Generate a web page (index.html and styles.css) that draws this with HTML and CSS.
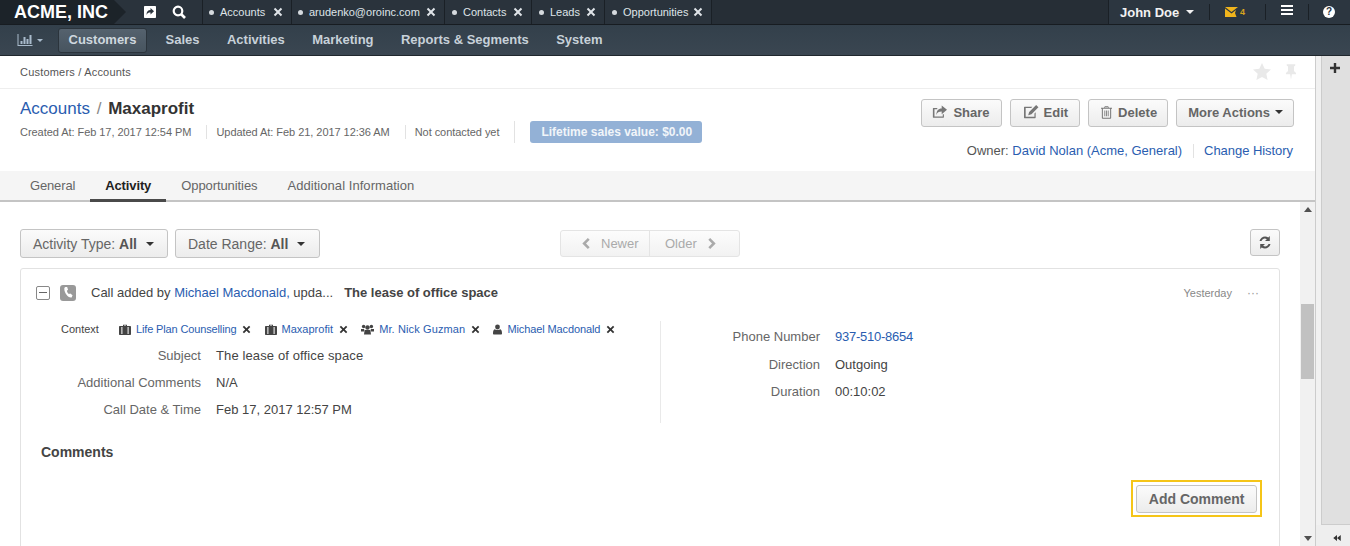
FILE: index.html
```html
<!DOCTYPE html>
<html lang="en">
<head>
  <meta charset="UTF-8">
  <title>Maxaprofit - Accounts</title>
  <meta name="viewport" content="width=device-width, initial-scale=1">
  <link rel="stylesheet" href="styles.css">
</head>
<body>
  <svg class="defs" width="0" height="0">
    <symbol id="i-x" viewBox="0 0 10 10"><path d="M2.2 .8 5 3.600 7.800 .8 9.200 2.200 6.400 5l2.800 2.800-1.400 1.400L5 6.400 2.200 9.200 .8 7.800 3.600 5 .8 2.200z"/></symbol>
    <symbol id="i-case" viewBox="0 0 12 11"><path d="M4 2V.8h4V2h3c.6 0 1 .4 1 1v7c0 .6-.4 1-1 1H1c-.6 0-1-.4-1-1V3c0-.6.4-1 1-1zm1 0h2v-.4H5zM2.400 3v7h1V3zm6.200 0v7h1V3z" fill-rule="evenodd"/></symbol>
    <symbol id="i-group" viewBox="0 0 13 10"><circle cx="2.600" cy="2" r="1.700"/><circle cx="10.400" cy="2" r="1.700"/><circle cx="6.500" cy="3" r="2.200"/><path d="M0 4.400h3.200L3 7H0zM13 4.400H9.800L10 7h3zM3.600 5.400h5.800L10 10H3z"/></symbol>
    <symbol id="i-user" viewBox="0 0 9 10"><circle cx="4.500" cy="2.500" r="2.400"/><path d="M1.500 4.800c1.500 1 4.500 1 6 0C8.600 5.400 9 7 9 9c0 .6-.4 1-1 1H1c-.6 0-1-.4-1-1 0-2 .4-3.600 1.500-4.200z"/></symbol>
    <symbol id="i-caret" viewBox="0 0 8 4"><path d="M0 0h8L4 4z"/></symbol>
  </svg>

  <header class="topbar">
    <div class="logo">ACME, INC</div>
    <div class="quick">
      <svg class="quick-icon" viewBox="0 0 14 14"><path d="M2 1h10c.6 0 1 .4 1 1v10c0 .6-.4 1-1 1H2c-.6 0-1-.4-1-1V2c0-.6.4-1 1-1zm5.500 2v2C5 5 3.500 6.500 3.500 10c.8-1.800 2-2.400 4-2.400v2L11 6.300z" fill-rule="evenodd"/></svg>
      <svg class="quick-icon" viewBox="0 0 14 14"><circle cx="6" cy="6" r="4.300" fill="none" stroke="#fff" stroke-width="2.200"/><path d="M9 9l4 4" stroke="#fff" stroke-width="2.600"/></svg>
    </div>
    <nav class="pins">
      <a class="pin pin-accounts"><i class="dot"></i>Accounts<svg class="pin-x"><use href="#i-x"/></svg></a>
      <a class="pin pin-email"><i class="dot"></i>arudenko@oroinc.com<svg class="pin-x"><use href="#i-x"/></svg></a>
      <a class="pin pin-contacts"><i class="dot"></i>Contacts<svg class="pin-x"><use href="#i-x"/></svg></a>
      <a class="pin pin-leads"><i class="dot"></i>Leads<svg class="pin-x"><use href="#i-x"/></svg></a>
      <a class="pin pin-opps"><i class="dot"></i>Opportunities<svg class="pin-x"><use href="#i-x"/></svg></a>
    </nav>
    <div class="usermenu">
      <div class="user">John Doe<svg class="user-caret"><use href="#i-caret"/></svg></div>
      <div class="mail">
        <svg class="mail-icon" viewBox="0 0 14 10"><path d="M0 0h13L6.500 5z"/><path d="M0 1.500 6.500 6.500 11 3l-1 3 1.500 4H0z"/></svg><span class="mail-count">4</span>
      </div>
      <div class="burger"><i></i><i></i><i></i></div>
      <div class="help">?</div>
    </div>
  </header>

  <nav class="mainnav">
    <div class="nav-chart">
      <svg class="chart-icon" viewBox="0 0 15 12"><path d="M0 0h1v11h14v1H0zM3 7h2v3H3zM6 3h2v7H6zM9 5h2v5H9zM12 1h2v9h-2z"/></svg>
      <svg class="chart-caret"><use href="#i-caret"/></svg>
    </div>
    <a class="nav-item active">Customers</a>
    <a class="nav-item">Sales</a>
    <a class="nav-item">Activities</a>
    <a class="nav-item">Marketing</a>
    <a class="nav-item">Reports &amp; Segments</a>
    <a class="nav-item">System</a>
  </nav>

  <div class="shell">
    <main class="content">
      <div class="crumbs">
        <span>Customers / Accounts</span>
        <div class="crumb-icons">
          <svg class="fav" viewBox="0 0 18 17"><path d="M9 0l2.700 5.800 6.300.7-4.700 4.300 1.300 6.200L9 13.900 3.400 17l1.300-6.200L0 6.500l6.300-.7z"/></svg>
          <svg class="pinned" viewBox="0 0 14 18"><path d="M2 0h10v1.500l-1.500 1V8c1.500.8 2.500 2 2.500 3.500H8L7 18l-1-6.500H1C1 10 2 8.800 3.500 8V2.500L2 1.500z"/></svg>
        </div>
      </div>

      <section class="head">
        <div class="head-left">
          <h1 class="title"><a>Accounts</a> <span class="slash">/</span> <b>Maxaprofit</b></h1>
          <div class="meta">
            <span class="meta-item">Created At: Feb 17, 2017 12:54 PM</span>
            <span class="meta-item">Updated At: Feb 21, 2017 12:36 AM</span>
            <span class="meta-item">Not contacted yet</span>
            <span class="meta-badge"><b>Lifetime sales value: $0.00</b></span>
          </div>
        </div>
        <div class="head-right">
          <div class="actions">
            <a class="btn btn-share">
              <svg class="btn-icon" viewBox="0 0 17 15"><path d="M11 0l6 5-6 5V7C7.500 7 6 8 5 11c0-5 2-7.500 6-7.500zM1.500 3H6v1.300H2.800v8.400h9.400V10h1.300v3.500c0 .3-.3.600-.6.600H1.500c-.3 0-.5-.3-.5-.6V3.600c0-.3.200-.6.500-.6z"/></svg>Share</a>
            <a class="btn btn-edit">
              <svg class="btn-icon" viewBox="0 0 17 15"><path d="M1.500 2H10L8.700 3.300H2.800v9.400h9.400V9l1.300-1.300v5.800c0 .3-.3.600-.6.600H1.500c-.3 0-.5-.3-.5-.6V2.600c0-.3.200-.6.500-.6zM14 0l2.500 2.500L9 10l-3.500 1L6.500 7.500z"/></svg>Edit</a>
            <a class="btn btn-delete">
              <svg class="btn-icon" viewBox="0 0 13 15"><path d="M4.500 0h4l.8 2H13v1.200h-1V14c0 .6-.4 1-1 1H2c-.6 0-1-.4-1-1V3.200H0V2h3.700zm.3 1.200L4.500 2h4l-.3-.8zM2.200 3.200v10.600h8.600V3.200zM4 5h1v7H4zm2 0h1v7H6zm2 0h1v7H8z" fill-rule="evenodd"/></svg>Delete</a>
            <a class="btn">More Actions<svg class="btn-caret"><use href="#i-caret"/></svg></a>
          </div>
          <div class="owner">
            <span class="owner-text">Owner: <a>David Nolan (Acme, General)</a></span>
            <a class="history">Change History</a>
          </div>
        </div>
      </section>

      <div class="tabs">
        <a class="tab">General</a>
        <a class="tab active">Activity</a>
        <a class="tab">Opportunities</a>
        <a class="tab">Additional Information</a>
      </div>

      <div class="scroller">
        <div class="pane">
          <div class="toolbar">
            <div class="filters">
              <a class="filter">Activity Type: <b>All</b><svg class="filter-caret"><use href="#i-caret"/></svg></a>
              <a class="filter">Date Range: <b>All</b><svg class="filter-caret"><use href="#i-caret"/></svg></a>
            </div>
            <div class="pager">
              <a class="pager-btn"><svg class="chev" viewBox="0 0 8 12"><path d="M6 0l2 2-4 4 4 4-2 2-6-6z"/></svg>Newer</a>
              <a class="pager-btn">Older<svg class="chev" viewBox="0 0 8 12"><path d="M2 0 0 2l4 4-4 4 2 2 6-6z"/></svg></a>
            </div>
            <a class="refresh">
              <svg viewBox="0 0 12 13" class="refresh-icon"><path d="M10.800 0v5H6l1.800-1.800C6 1.800 3.400 2.500 2.500 5H.5C1.500 1 6-1 9.300 1.500zM1.200 13V8H6L4.200 9.800c1.800 1.400 4.400.7 5.300-1.800h2c-1 4-5.500 6-8.800 3.500z"/></svg>
            </a>
          </div>

          <article class="card">
            <div class="card-head">
              <i class="collapse"></i>
              <span class="phone-badge">
                <svg viewBox="0 0 10 12"><path d="M1.500 0 3.500 0l1 3-1.300 1c.3 1.500 1.200 3 2.300 3.800L7 7l2.500 2-1 2.500C4 12.500-.5 5 .5 .8z" fill="#fff"/></svg>
              </span>
              <span class="summary">Call added by <a>Michael Macdonald,</a> upda...</span>
              <b class="subject">The lease of office space</b>
              <span class="when">Yesterday</span>
              <span class="more">···</span>
            </div>
            <div class="details">
              <div class="col col-left">
                <div class="context">
                  <span class="context-label">Context</span>
                  <span class="chip"><svg class="chip-icon"><use href="#i-case"/></svg><a>Life Plan Counselling</a><svg class="chip-x"><use href="#i-x"/></svg></span>
                  <span class="chip"><svg class="chip-icon"><use href="#i-case"/></svg><a>Maxaprofit</a><svg class="chip-x"><use href="#i-x"/></svg></span>
                  <span class="chip"><svg class="chip-icon chip-icon-wide"><use href="#i-group"/></svg><a>Mr. Nick Guzman</a><svg class="chip-x"><use href="#i-x"/></svg></span>
                  <span class="chip"><svg class="chip-icon chip-icon-thin"><use href="#i-user"/></svg><a>Michael Macdonald</a><svg class="chip-x"><use href="#i-x"/></svg></span>
                </div>
                <div class="field"><label>Subject</label><span>The lease of office space</span></div>
                <div class="field"><label>Additional Comments</label><span>N/A</span></div>
                <div class="field"><label>Call Date &amp; Time</label><span>Feb 17, 2017 12:57 PM</span></div>
              </div>
              <div class="col col-right">
                <div class="field"><label>Phone Number</label><a>937-510-8654</a></div>
                <div class="field"><label>Direction</label><span>Outgoing</span></div>
                <div class="field"><label>Duration</label><span>00:10:02</span></div>
              </div>
            </div>
            <h3 class="comments-title">Comments</h3>
            <div class="comments-foot">
              <span class="highlight"><a class="add-comment">Add Comment</a></span>
            </div>
          </article>
        </div>
        <div class="scrollbar">
          <i class="arrow-up"></i>
          <div class="track"><div class="thumb"></div></div>
          <i class="arrow-down"></i>
        </div>
      </div>
    </main>

    <aside class="sidebar">
      <div class="side-panel">
        <svg class="side-plus" viewBox="0 0 10 10"><path d="M3.800 0h2.400v3.800H10v2.400H6.200V10H3.800V6.200H0V3.800h3.800z"/></svg>
      </div>
      <div class="side-foot">
        <svg class="side-rewind" viewBox="0 0 10 8"><path d="M5 0v8L0 4zM10 0v8L5 4z"/></svg>
      </div>
    </aside>
  </div>
</body>
</html>
```

FILE: styles.css
```css
* { box-sizing: border-box; }
html, body { height: 100%; }
body { margin: 0; height: 546px; overflow: hidden; font-family: "Liberation Sans", Arial, sans-serif; font-size: 13px; color: #444; background: #fff; }
a { color: #2a5db0; text-decoration: none; }
svg { fill: currentColor; display: block; flex: none; }
.defs { position: absolute; }

/* top bar */
.topbar { height: 25px; display: flex; background: #262e36; border-bottom: 1px solid #171c21; color: #fff; }
.logo { position: relative; width: 114px; padding-left: 14px; font-size: 18px; line-height: 24px; font-weight: bold; white-space: nowrap; background: #1c2329; }
.logo::after { content: ""; position: absolute; left: 100%; top: 0; border-left: 12px solid #1c2329; border-top: 12px solid transparent; border-bottom: 12px solid transparent; }
.quick { width: 88px; height: 24px; display: flex; align-items: center; gap: 15px; padding-left: 29px; background: #2a333c; }
.quick-icon { width: 14px; height: 14px; fill: #fff; }
.pins { display: flex; flex: 1; }
.pin { display: flex; align-items: center; height: 24px; padding-left: 5px; font-size: 11px; color: #dfe4e8; border-left: 1px solid #1a2026; background: #2a333c; }
.pin-accounts { width: 89px; }
.pin-email { width: 153px; }
.pin-contacts { width: 87px; padding-left: 6px; }
.pin-leads { width: 73px; padding-left: 6px; }
.pin-opps { width: 108px; padding-left: 6px; border-right: 1px solid #1a2026; }
.dot { width: 5px; height: 5px; border-radius: 50%; background: #d5dade; margin-right: 6px; margin-left: 1px; }
.pin-x { width: 10px; height: 10px; margin-left: auto; margin-right: 8px; fill: #dfe4e8; }
.usermenu { display: flex; align-items: center; width: 242px; background: #2c3640; border-left: 1px solid #1a2026; height: 24px; }
.user { width: 101px; padding-left: 11px; display: flex; align-items: center; font-size: 13px; font-weight: bold; color: #f2f2f2; border-right: 1px solid #1a2026; height: 16px; }
.user-caret { width: 8px; height: 4px; margin-left: 7px; fill: #f2f2f2; }
.mail { width: 56px; height: 16px; padding-left: 15px; display: flex; align-items: center; border-right: 1px solid #1a2026; color: #d6a21e; }
.mail-icon { width: 14px; height: 10px; fill: #f0b41c; }
.mail-count { font-size: 9px; font-weight: bold; margin-left: 1px; }
.burger { width: 43px; height: 16px; padding: 1px 15px 0; border-right: 1px solid #1a2026; display: flex; flex-direction: column; gap: 2px; }
.burger i { display: block; height: 2px; background: #fff; }
.help { width: 12px; height: 12px; margin-left: 14px; background: #fff; color: #2a333c; border-radius: 50%; text-align: center; font-size: 10px; line-height: 12px; font-weight: bold; }

/* main nav */
.mainnav { height: 31px; display: flex; align-items: center; background: linear-gradient(#33404b, #3a4651); border-bottom: 1px solid #20272d; }
.nav-chart { width: 58px; display: flex; align-items: center; padding-left: 17px; color: #a9bbcc; }
.chart-icon { width: 16px; height: 12px; }
.chart-caret { width: 6px; height: 3px; margin-left: 4px; }
.nav-item { display: block; font-size: 13px; font-weight: bold; color: #c7d1d9; line-height: 22px; padding: 0 13.700px; }
.nav-item.active { height: 25px; padding: 0 9.500px; margin-right: 5px; border-radius: 3px; background: linear-gradient(#55626e, #47545f); border: 1px solid #2b343c; color: #cfd8df; }

/* page shell */
.shell { display: flex; height: 490px; }
.content { width: 1316px; display: flex; flex-direction: column; border-right: 1px solid #ccc; }
.crumbs { height: 33px; padding: 0 18px 0 20px; display: flex; justify-content: space-between; align-items: center; font-size: 11px; letter-spacing: 0.2px; color: #555; border-bottom: 1px solid #eee; }
.crumb-icons { display: flex; gap: 14px; }
.fav { width: 18px; height: 17px; fill: #e9e9e9; }
.pinned { width: 12px; height: 18px; fill: #e9e9e9; }

.head { height: 82px; display: flex; justify-content: space-between; padding: 0 21px 0 20px; }
.title { margin: 10px 0 0; font-size: 17px; line-height: 20px; font-weight: normal; }
.title b { color: #333; font-size: 17px; }
.slash { color: #888; margin: 0 2px; }
.meta { display: flex; align-items: center; margin-top: 2px; font-size: 11px; color: #666; height: 22px; }
.meta-item { padding-right: 15px; margin-right: 9px; height: 14px; line-height: 14px; letter-spacing: -0.05px; border-right: 1px solid #e2e2e2; }
.meta-item:nth-child(3) { margin-right: 15px; height: 22px; line-height: 22px; }
.meta-badge { height: 22px; line-height: 22px; padding: 0 10px 0 11px; border-radius: 3px; background: #93b1d6; color: #f1f5f9; font-size: 12px; }
.head-right { display: flex; flex-direction: column; align-items: flex-end; }
.actions { display: flex; gap: 8px; margin-top: 10px; }
.btn { display: flex; align-items: center; height: 28px; padding: 0 10px 2px 11px; font-size: 13px; font-weight: bold; color: #666; border: 1px solid #c4c4c4; border-radius: 3px; background: linear-gradient(#fbfbfb, #ececec); }
.btn-icon { width: 16px; height: 14px; margin-right: 5px; fill: #777; }
.btn-share { padding-left: 10px; padding-right: 11px; }
.btn-share .btn-icon { width: 15px; margin-right: 6px; }
.btn-edit { padding-left: 12px; padding-right: 11px; }
.btn-delete { padding-left: 12px; }
.btn-delete .btn-icon { width: 11px; height: 15px; margin-right: 6px; }
.btn-caret { width: 8px; height: 4px; margin-left: 5px; fill: #333; }
.owner { display: flex; align-items: center; margin-top: 17px; margin-right: 1px; font-size: 13px; line-height: 14px; }
.owner-text { color: #555; padding-right: 11px; margin-right: 10px; border-right: 1px solid #e2e2e2; }
.history { letter-spacing: -0.05px; }

.tabs { height: 31px; display: flex; padding-left: 15px; background: #f5f5f5; border-bottom: 2px solid #c4c4c4; }
.tab { height: 31px; line-height: 30px; padding: 0 15px; color: #666; font-size: 13px; letter-spacing: -0.08px; }
.tab:first-child { letter-spacing: -0.15px; }
.tab:last-child { letter-spacing: 0.05px; }
.tab.active { font-weight: bold; color: #222; letter-spacing: -0.12px; border-bottom: 3px solid #4a4a4a; }

/* scrolling pane */
.scroller { flex: 1; min-height: 0; display: flex; }
.pane { flex: 1; padding: 27px 20px 0; overflow: hidden; }
.toolbar { display: flex; align-items: flex-start; }
.filters { display: flex; gap: 7px; width: 540px; }
.filter { display: flex; align-items: center; height: 29px; padding: 0 13px 0 12px; font-size: 14px; color: #666; border: 1px solid #c4c4c4; border-radius: 3px; background: linear-gradient(#fbfbfb, #ececec); white-space: pre; }
.filter + .filter { padding-right: 14px; }
.filter b { color: #555; }
.filter-caret { width: 8px; height: 4px; margin-left: 9px; fill: #333; }
.pager { display: flex; height: 27px; margin-top: 1px; border: 1px solid #e4e4e4; border-radius: 3px; background: linear-gradient(#fcfcfc, #f2f2f2); }
.pager-btn { display: flex; align-items: center; gap: 11px; width: 88px; padding-left: 21px; color: #aaa; font-size: 13px; }
.pager-btn + .pager-btn { width: 90px; border-left: 1px solid #e4e4e4; padding-left: 15px; }
.chev { width: 8px; height: 11px; fill: #aaa; }
.refresh { display: flex; align-items: center; justify-content: center; width: 30px; height: 27px; margin-left: auto; color: #555; border: 1px solid #c4c4c4; border-radius: 3px; background: linear-gradient(#fbfbfb, #ececec); }
.refresh-icon { width: 12px; height: 13px; }

.card { margin-top: 10px; height: 300px; border: 1px solid #e2e2e2; border-radius: 3px 3px 0 0; padding: 0 20px; }
.card-head { display: flex; align-items: center; height: 47px; }
.collapse { position: relative; width: 14px; height: 14px; margin-left: -5px; border: 1px solid #888; border-radius: 2px; }
.collapse::after { content: ""; position: absolute; left: 2px; right: 2px; top: 5px; height: 1px; background: #666; }
.phone-badge { display: flex; align-items: center; justify-content: center; width: 16px; height: 16px; margin-left: 10px; border-radius: 3px; background: #999; }
.phone-badge svg { width: 9px; height: 11px; }
.summary { margin-left: 15px; color: #444; font-size: 13px; }
.subject { margin-left: 11px; color: #444; font-size: 13px; }
.when { margin-left: auto; font-size: 11px; color: #888; }
.more { margin-left: 15px; color: #999; font-size: 12px; }

.details { display: flex; height: 102px; margin-top: 5px; }
.col-left { width: 620px; border-right: 1px solid #e9e9e9; }
.col-right { padding-top: 2px; }
.context { display: flex; align-items: center; height: 16px; margin-left: 20px; font-size: 11px; color: #444; }
.context-label { width: 58px; }
.chip { display: flex; align-items: center; margin-right: 13.200px; }
.chip a { font-size: 11px; }
.chip:nth-child(2) a { letter-spacing: -0.14px; }
.chip:nth-child(4) a { letter-spacing: 0.12px; }
.chip:nth-child(5) a { letter-spacing: -0.12px; }
.chip-icon { width: 12px; height: 11px; margin-right: 5px; fill: #444; }
.chip-icon-wide { width: 13px; }
.chip-icon-thin { width: 9px; }
.chip-x { width: 9px; height: 9px; margin-left: 6px; fill: #333; }
.field { display: flex; height: 27px; align-items: center; color: #444; }
.col-left .context + .field { margin-top: 5px; }
.col-left .context + .field span { letter-spacing: 0.12px; }
.field label { width: 175px; padding-right: 15px; text-align: right; color: #666; }
.col-right .field:first-child { margin-bottom: 1px; }
.col-right .field label { width: 159px; padding-right: 0; }
.col-right .field > a, .col-right .field > span { padding-left: 15px; }
.col-right .field > a { letter-spacing: -0.25px; }
.comments-title { margin: 20px 0 0; font-size: 14px; line-height: 18px; color: #444; }
.comments-foot { display: flex; justify-content: flex-end; margin-top: 19px; margin-right: -3px; }
.highlight { display: block; padding: 3px 3px 2px; border: 2px solid #f5c518; }
.add-comment { display: block; height: 28px; line-height: 26px; padding: 0 11.500px; font-size: 14px; font-weight: bold; color: #666; border: 1px solid #c4c4c4; border-radius: 3px; background: linear-gradient(#fbfbfb, #ececec); }

.scrollbar { width: 15px; display: flex; flex-direction: column; background: #f1f1f1; }
.arrow-up, .arrow-down { height: 15px; display: block; }
.arrow-up::before { content: ""; display: block; margin: 5px auto 0; width: 0; border: 4px solid transparent; border-top: 0; border-bottom: 5px solid #505050; }
.arrow-down::before { content: ""; display: block; margin: 5px auto 0; width: 0; border: 4px solid transparent; border-bottom: 0; border-top: 5px solid #505050; }
.track { flex: 1; padding-top: 87px; }
.thumb { height: 75px; margin: 0 1px; background: #c1c1c1; }

/* right sidebar */
.sidebar { width: 34px; display: flex; flex-direction: column; background: #f1f1f1; }
.side-panel { flex: 1; margin-left: 5px; padding-top: 7px; background: #e0e0e0; border-left: 1px solid #ccc; border-bottom: 1px solid #ccc; }
.side-plus { width: 10px; height: 10px; margin-left: 8px; fill: #333; }
.side-foot { height: 21px; padding: 10px 0 0 17px; background: #eee; }
.side-rewind { width: 8px; height: 6px; fill: #333; }
```
